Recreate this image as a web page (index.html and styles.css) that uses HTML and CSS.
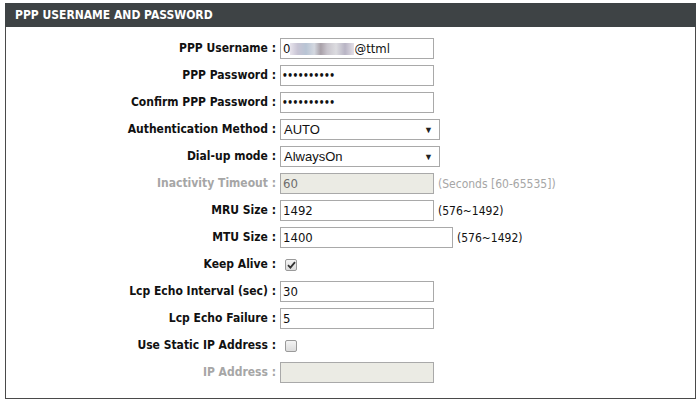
FILE: index.html
```html
<!DOCTYPE html>
<html>
<head>
<meta charset="utf-8">
<link rel="stylesheet" href="styles.css">
</head>
<body>
<div class="panel">
  <div class="header">PPP USERNAME AND PASSWORD</div>
  <div class="form">
    <div class="label">PPP Username :</div>
    <div class="field"><div class="box text">0<span class="blur"></span>@ttml</div></div>

    <div class="label">PPP Password :</div>
    <div class="field"><div class="box dots">&#8226;&#8226;&#8226;&#8226;&#8226;&#8226;&#8226;&#8226;&#8226;&#8226;</div></div>

    <div class="label">Confirm PPP Password :</div>
    <div class="field"><div class="box dots">&#8226;&#8226;&#8226;&#8226;&#8226;&#8226;&#8226;&#8226;&#8226;&#8226;</div></div>

    <div class="label">Authentication Method :</div>
    <div class="field"><div class="select"><span>AUTO</span><span class="arrow">&#9660;</span></div></div>

    <div class="label">Dial-up mode :</div>
    <div class="field"><div class="select"><span>AlwaysOn</span><span class="arrow">&#9660;</span></div></div>

    <div class="label disabled">Inactivity Timeout :</div>
    <div class="field"><div class="box text off">60</div><span class="note off">(Seconds [60-65535])</span></div>

    <div class="label">MRU Size :</div>
    <div class="field"><div class="box text">1492</div><span class="note">(576~1492)</span></div>

    <div class="label">MTU Size :</div>
    <div class="field"><div class="box text wide">1400</div><span class="note">(576~1492)</span></div>

    <div class="label">Keep Alive :</div>
    <div class="field"><span class="check"><svg width="9" height="8" viewBox="0 0 9 8"><path d="M1 4.2 L3.4 6.6 L8 1.2" fill="none" stroke="#333" stroke-width="1.8"/></svg></span></div>

    <div class="label">Lcp Echo Interval (sec) :</div>
    <div class="field"><div class="box text">30</div></div>

    <div class="label">Lcp Echo Failure :</div>
    <div class="field"><div class="box text">5</div></div>

    <div class="label">Use Static IP Address :</div>
    <div class="field"><span class="check"></span></div>

    <div class="label disabled">IP Address :</div>
    <div class="field"><div class="box text off"></div></div>
  </div>
</div>
</body>
</html>
```
FILE: styles.css
```css
html, body { margin: 0; padding: 0; background: #fff; }
body { font-family: "DejaVu Sans Condensed", "DejaVu Sans", sans-serif; font-size: 12px; color: #000; }
.panel {
  margin: 3px 4px 0 5px;
  border: 1px solid #4a4a4a;
  border-top: none;
  box-sizing: border-box;
  height: 396px;
}
.header {
  background: #3e4345;
  color: #fff;
  font-weight: bold;
  height: 24px;
  line-height: 25px;
  padding-left: 10px;
  margin: 0 -1px 0 -1px;
}
.form {
  display: grid;
  grid-template-columns: 274px 1fr;
  grid-auto-rows: 21px;
  row-gap: 6px;
  padding-top: 11px;
}
.label {
  text-align: right;
  font-weight: bold;
  line-height: 21px;
  padding-right: 4px;
  white-space: nowrap;
  color: #111;
}
.label.disabled { color: #a6a6a6; }
.field { display: flex; align-items: center; gap: 4px; }
.box {
  box-sizing: border-box;
  width: 154px;
  height: 21px;
  border: 1px solid #a9a9a9;
  background: #fff;
  font-size: 13px;
  line-height: 19px;
  padding-left: 2px;
  white-space: nowrap;
  color: #111;
  display: flex;
  align-items: center;
}
.box.wide { width: 173px; }
.box.off { background: #ebebe4; color: #6d6d6d; }
.dots { font-size: 10px; font-weight: bold; letter-spacing: -0.5px; padding-left: 1px; }
.blur {
  display: inline-block;
  width: 64px;
  height: 12px;
  background: linear-gradient(90deg, #e8e4ec 0, #c8c4d4 12%, #b8c4d4 25%, #d4d8e0 38%, #a8a0a8 48%, #c8c4cc 58%, #dcdce0 72%, #b8b4c4 86%, #e4e0e8 100%);
}
.select {
  box-sizing: border-box;
  width: 160px;
  height: 21px;
  border: 1px solid #a9a9a9;
  background: #fff;
  font-family: "Liberation Sans", Arial, sans-serif;
  font-size: 13px;
  padding: 0 6px 0 3px;
  display: flex;
  align-items: center;
  justify-content: space-between;
  color: #111;
}
.arrow { font-size: 9px; color: #222; }
.note { font-size: 12px; color: #111; white-space: nowrap; }
.note.off { color: #a6a6a6; }
.check {
  box-sizing: border-box;
  width: 12px;
  height: 12px;
  margin-left: 5px;
  border: 1px solid #9a9a9a;
  border-radius: 2px;
  background: linear-gradient(#f4f4f4, #dcdcdc);
  display: flex;
  align-items: center;
  justify-content: center;
}
```
